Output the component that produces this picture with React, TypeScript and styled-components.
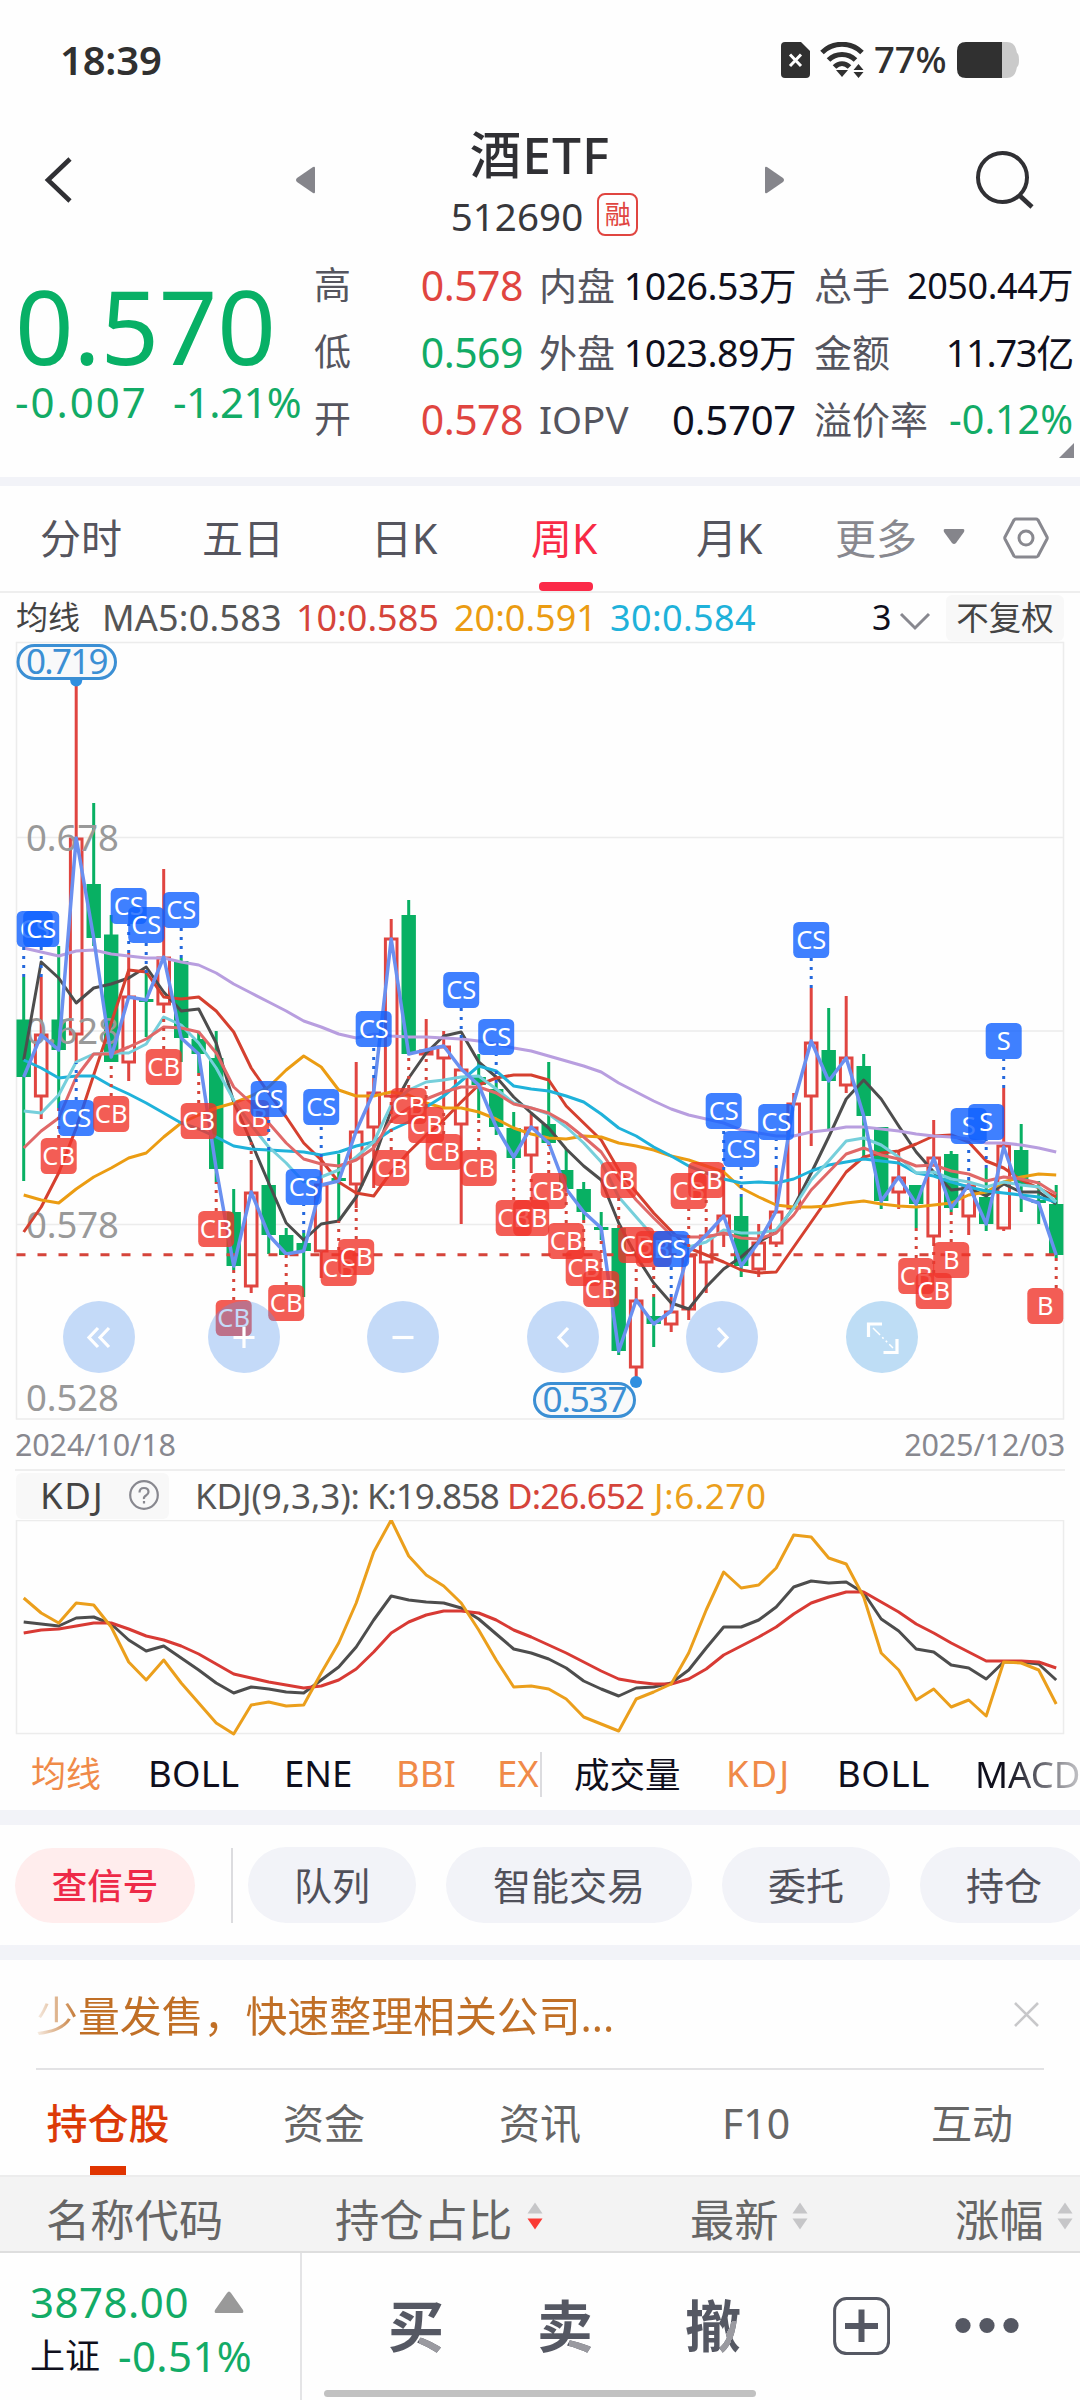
import React from 'react';
import styled, { createGlobalStyle, css } from 'styled-components';

const RED = '#e04540';
const GREEN = '#12ab66';
const INK = '#0f0f1c';
const SLATE = '#55555e';
const FONT = "'Noto Sans', 'Noto Sans CJK SC', sans-serif";

const Global = createGlobalStyle`
  * { box-sizing: border-box; }
  body { margin: 0; background: #fff; font-family: ${FONT}; }
`;

const Screen = styled.main`
  width: 1080px;
  height: 2400px;
  overflow: hidden;
  display: flex;
  flex-direction: column;
  background: #fefefe;
  white-space: nowrap;
`;

interface CellProps { $w?: number; $size?: number; $color?: string; $ls?: number; $weight?: number; $align?: string; $indent?: number }
const Cell = styled.span<CellProps>`
  flex: none;
  display: block;
  ${p => p.$w !== undefined && css`width: ${p.$w}px;`}
  ${p => p.$size && css`font-size: ${p.$size}px;`}
  color: ${p => p.$color ?? 'inherit'};
  letter-spacing: ${p => p.$ls ?? 0}px;
  font-weight: ${p => p.$weight ?? 400};
  text-align: ${p => p.$align ?? 'left'};
  padding-left: ${p => p.$indent ?? 0}px;
  line-height: 1.2;
`;

const Band = styled.div<{ $h: number }>`
  flex: none;
  height: ${p => p.$h}px;
  background: #f2f3f8;
`;

/* ---------- status bar ---------- */
const StatusBar = styled.header`
  flex: none;
  height: 120px;
  padding: 0 61px 0 60px;
  display: flex;
  align-items: center;
  justify-content: space-between;
  color: #303030;
`;
const StatusIcons = styled.div`
  display: flex;
  align-items: center;
  gap: 10px;
`;

/* ---------- title ---------- */
const TitleBar = styled.div`
  flex: none;
  height: 132px;
  display: grid;
  grid-template-columns: 296px 19px 450px 19px 1fr;
  align-items: start;
`;
const TitleCell = styled.div<{ $left?: number; $top?: number }>`
  padding-left: ${p => p.$left ?? 0}px;
  padding-top: ${p => p.$top ?? 0}px;
  svg { display: block; }
`;
const TitleStack = styled.div`
  display: flex;
  flex-direction: column;
  align-items: center;
  padding-top: 0;
`;
const StockName = styled.h1`
  margin: 0;
  height: 69px;
  line-height: 68px;
  font-size: 51.5px;
  font-weight: 500;
  color: #303034;
  letter-spacing: 1px;
`;
const CodeRow = styled.div`
  display: flex;
  align-items: center;
  gap: 14px;
  margin-left: 9px;
  height: 54px;
  color: #38383c;
`;
const MarginBadge = styled.span`
  width: 41px;
  height: 43px;
  margin-top: -3px;
  border: 2px solid ${RED};
  border-radius: 8px;
  color: ${RED};
  font-size: 26px;
  line-height: 38px;
  text-align: center;
`;

/* ---------- quote ---------- */
const Quote = styled.section`
  flex: none;
  height: 225px;
  display: grid;
  grid-template-columns: 314px 225px 275px 1fr;
  position: relative;
`;
const PriceBlock = styled.div`
  padding: 16px 0 0 15px;
  color: ${GREEN};
`;
const BigPrice = styled.div`
  height: 110px;
  line-height: 110px;
  margin-top: 2px;
  font-size: 102.5px;
  letter-spacing: -0.3px;
  color: #08b066;
`;
const ChangeRow = styled.div`
  display: flex;
  height: 46px;
  margin-top: -1px;
  align-items: center;
`;
const QuoteColumn = styled.div<{ $right: number }>`
  padding-right: ${p => p.$right}px;
`;
const QuoteRow = styled.div`
  height: 67px;
  display: flex;
  align-items: center;
  justify-content: space-between;
  font-size: 38px;
  color: ${SLATE};
`;
const ExpandMark = styled.svg`
  position: absolute;
  right: 6px;
  top: 191px;
`;

/* ---------- period tabs ---------- */
const PeriodTabs = styled.nav`
  flex: none;
  height: 107px;
  padding-left: 40px;
  display: flex;
  align-items: stretch;
  border-bottom: 2px solid #eee;
`;
const PeriodTab = styled.div<{ $w: number; $active?: boolean; $muted?: boolean }>`
  flex: none;
  width: ${p => p.$w}px;
  display: flex;
  flex-direction: column;
  justify-content: flex-end;
  font-size: 41px;
  color: ${p => (p.$active ? '#f82a45' : p.$muted ? '#88888f' : SLATE)};
  span { display: block; height: 83px; line-height: 79px; }
`;
const PeriodLine = styled.i<{ $on?: boolean }>`
  display: block;
  width: 54px;
  height: 9px;
  margin-left: 8px;
  border-radius: 4px;
  background: ${p => (p.$on ? '#fb2a48' : 'transparent')};
`;
const TabIcon = styled.div<{ $w: number; $top: number }>`
  width: ${p => p.$w}px;
  padding-top: ${p => p.$top}px;
`;

/* ---------- main chart ---------- */
const Legend = styled.div`
  flex: none;
  height: 49px;
  padding-left: 16px;
  display: flex;
  align-items: center;
  font-size: 36px;
  color: #555;
`;
const Chip = styled.div<{ $w: number; $h: number }>`
  flex: none;
  width: ${p => p.$w}px;
  height: ${p => p.$h}px;
  display: flex;
  align-items: center;
  background: #f8f8f8;
  border-radius: 6px;
  color: #444;
`;
const ChartArea = styled.section`
  flex: none;
  height: 778px;
  position: relative;
  svg { display: block; overflow: visible; }
`;
const RoundButton = styled.button<{ $x: number; $tint?: string }>`
  position: absolute;
  left: ${p => p.$x - 36}px;
  top: 659px;
  width: 72px;
  height: 72px;
  padding: 0;
  border: 0;
  border-radius: 50%;
  background: ${p => p.$tint ?? 'rgba(89, 152, 238, 0.35)'};
`;
const DateRow = styled.div`
  flex: none;
  height: 51px;
  margin: 0 15px 0 15px;
  display: flex;
  justify-content: space-between;
  align-items: center;
  color: #88888f;
  border-bottom: 2px solid #eee;
`;

/* ---------- KDJ ---------- */
const KdjHeader = styled.div`
  flex: none;
  height: 49px;
  padding-left: 16px;
  display: flex;
  align-items: center;
  font-size: 36px;
  color: #555;
`;
const KdjArea = styled.section`
  flex: none;
  height: 216px;
  svg { display: block; }
`;
const IndicatorRow = styled.div`
  flex: none;
  height: 74px;
  padding: 2px 0 0 31px;
  display: flex;
  align-items: center;
  font-size: 36.5px;
  color: ${INK};
`;
const Divider = styled.i<{ $h: number; $mr?: number }>`
  flex: none;
  width: 2px;
  height: ${p => p.$h}px;
  margin-right: ${p => p.$mr ?? 0}px;
  background: #dcdcdf;
`;
const FadeOut = styled.span`
  width: 104px;
  overflow: hidden;
  -webkit-mask-image: linear-gradient(90deg, #000 30%, rgba(0, 0, 0, 0.25) 100%);
  mask-image: linear-gradient(90deg, #000 30%, rgba(0, 0, 0, 0.25) 100%);
`;

/* ---------- actions ---------- */
const Actions = styled.div`
  flex: none;
  height: 120px;
  padding-left: 15px;
  display: flex;
  align-items: center;
`;
const Pill = styled.button<{ $w: number; $hot?: boolean }>`
  flex: none;
  width: ${p => p.$w}px;
  height: ${p => (p.$hot ? 75 : 76)}px;
  margin-right: ${p => (p.$hot ? 36 : 30)}px;
  padding: 0 0 4px;
  border: 0;
  border-radius: 38px;
  background: ${p => (p.$hot ? '#ffeded' : '#f2f3f8')};
  color: ${p => (p.$hot ? '#ee2a48' : '#50505a')};
  font-family: inherit;
  font-size: ${p => (p.$hot ? 35.5 : 38)}px;
  font-weight: ${p => (p.$hot ? 500 : 400)};
`;

/* ---------- notice ---------- */
const Notice = styled.div`
  flex: none;
  height: 110px;
  margin: 0 36px;
  padding-right: 4px;
  display: flex;
  align-items: center;
  justify-content: space-between;
  border-bottom: 2px solid #e2e2e4;
`;
const NoticeText = styled.span`
  padding-top: 3px;
  font-size: 41.9px;
  line-height: 60px;
  background: linear-gradient(90deg, rgba(192, 111, 38, 0.1), #c06f26 44px);
  -webkit-background-clip: text;
  background-clip: text;
  color: transparent;
`;

/* ---------- holdings ---------- */
const InfoTabs = styled.nav`
  flex: none;
  height: 105px;
  display: grid;
  grid-template-columns: repeat(5, 216px);
`;
const InfoTab = styled.div<{ $active?: boolean }>`
  display: flex;
  flex-direction: column;
  align-items: center;
  font-size: 41px;
  font-weight: ${p => (p.$active ? 500 : 400)};
  color: ${p => (p.$active ? '#dc3a08' : '#666')};
  span { height: 96px; line-height: 107px; }
  i { width: 36px; height: 9px; background: ${p => (p.$active ? '#e03400' : 'transparent')}; }
`;
const TableHead = styled.div`
  flex: none;
  height: 78px;
  padding: 0 0 0 46px;
  display: flex;
  align-items: center;
  background: #f3f3f3;
  border-top: 2px solid #ececec;
  border-bottom: 2px solid #dedede;
  color: #666;
  font-size: 44.3px;
`;
const HeadLabel = styled.span<{ $w: number }>`
  flex: none;
  width: ${p => p.$w}px;
  padding-top: 11px;
  line-height: 54px;
`;
const SortBox = styled.span<{ $w?: number }>`
  flex: none;
  width: ${p => p.$w ?? 16}px;
  padding-top: 3px;
  svg { display: block; }
`;

/* ---------- bottom bar ---------- */
const BottomBar = styled.footer`
  flex: none;
  height: 147px;
  display: grid;
  grid-template-columns: 302px 1fr;
`;
const IndexBox = styled.div`
  border-right: 2px solid #e4e4e6;
  padding: 13px 0 0 30px;
  color: ${GREEN};
  font-size: 42px;
`;
const IndexRow = styled.div<{ $h: number }>`
  height: ${p => p.$h}px;
  display: flex;
  align-items: center;
`;
const Trade = styled.div`
  display: flex;
  flex-direction: column;
`;
const TradeRow = styled.div`
  height: 137px;
  padding: 9px 0 0 86px;
  display: flex;
  align-items: center;
`;
const TradeWord = styled.span<{ $fill: string; $w: number }>`
  width: ${p => p.$w}px;
  height: 70px;
  line-height: 68px;
  font-size: 56px;
  font-weight: 700;
  color: transparent;
  background: ${p => p.$fill};
  -webkit-background-clip: text;
  background-clip: text;
`;
const HomeBar = styled.i`
  width: 432px;
  height: 7px;
  margin-left: 22px;
  border-radius: 4px;
  background: #c1c1c1;
`;

/* ---------- data ---------- */
const X0 = 23.7;
const STEP = 17.5;
const xAt = (i: number) => X0 + STEP * i;

type Candle = [up: 0 | 1, high: number, top: number, bottom: number, low: number];
const candles: Candle[] = [
  [0, 977, 1019.5, 1077, 1181], [1, 977, 1034, 1097, 1119], [0, 946, 1019.5, 1050, 1108], [1, 681, 838, 1035, 1063],
  [0, 803, 884, 938, 946], [0, 915, 934.5, 1062, 1062], [1, 953, 996, 1063, 1081], [0, 973, 999, 1001, 1037],
  [1, 869, 957, 1005, 1012], [0, 958, 961, 1038, 1062], [0, 1031, 1039, 1054, 1073], [0, 1031, 1058, 1169, 1182],
  [0, 1189, 1212, 1266, 1270], [1, 1163, 1192, 1287, 1293], [0, 1150, 1185, 1235, 1254], [0, 1228, 1235, 1255, 1255],
  [0, 1233, 1243, 1251, 1297], [1, 1157, 1184, 1252, 1278], [0, 1154, 1178, 1181, 1221], [1, 1062, 1131, 1185, 1208],
  [1, 1078, 1092, 1128, 1188], [1, 919, 938, 1097, 1098], [0, 900, 915, 1054, 1054], [1, 1019, 1050, 1055, 1055],
  [1, 1031, 1046, 1059, 1107], [1, 1038, 1069, 1125, 1224], [0, 1054, 1077, 1085, 1118], [0, 1083, 1089, 1127, 1135],
  [0, 1112, 1128, 1158, 1169], [1, 1114, 1127, 1156, 1172], [0, 1062, 1124, 1143, 1145], [0, 1149, 1170, 1189, 1189],
  [0, 1182, 1189, 1212, 1220], [0, 1212, 1227, 1229, 1240], [0, 1228, 1228, 1351, 1355], [1, 1290, 1300, 1368, 1377],
  [0, 1297, 1316, 1324, 1347], [1, 1297, 1311, 1325, 1332], [1, 1247, 1255, 1310, 1320], [1, 1230, 1235, 1263, 1293],
  [1, 1170, 1215, 1235, 1247], [0, 1197, 1216, 1266, 1277], [1, 1224, 1242, 1270, 1277], [1, 1168, 1211, 1244, 1247],
  [1, 1093, 1103, 1209, 1209], [1, 988, 1042, 1097, 1146], [0, 1008, 1050, 1081, 1130], [1, 996, 1057, 1086, 1093],
  [0, 1054, 1066, 1116, 1157], [0, 1127, 1127, 1201, 1209], [1, 1151, 1177, 1193, 1209], [0, 1185, 1185, 1204, 1228],
  [1, 1120, 1157, 1237, 1243], [0, 1151, 1154, 1208, 1212], [1, 1180, 1185, 1217, 1235], [0, 1168, 1197, 1224, 1231],
  [1, 1088, 1145, 1229, 1231], [0, 1124, 1150, 1185, 1212], [0, 1181, 1200, 1203, 1224], [0, 1185, 1204, 1255, 1258],
];

interface Series { color: string; width?: number; ys: number[] }
const averages: Series[] = [
  { color: '#4d4d4d', ys: [1060, 962, 978, 1003, 988, 984, 978, 967, 992, 1011, 1009, 1043, 1102, 1142, 1183, 1223, 1240, 1224, 1221, 1197, 1160, 1110, 1078, 1053, 1036, 1032, 1062, 1077, 1097, 1113, 1128, 1149, 1166, 1180, 1223, 1256, 1283, 1303, 1309, 1287, 1269, 1257, 1242, 1232, 1207, 1173, 1137, 1099, 1080, 1099, 1126, 1152, 1172, 1190, 1188, 1196, 1184, 1192, 1192, 1204] },
  { color: '#d5402f', ys: [1232, 1207, 1173, 1128, 1075, 1023, 970, 972, 997, 999, 997, 1011, 1032, 1068, 1093, 1117, 1143, 1160, 1182, 1193, 1196, 1172, 1152, 1135, 1120, 1102, 1085, 1078, 1075, 1075, 1080, 1106, 1123, 1140, 1170, 1192, 1213, 1231, 1248, 1255, 1262, 1270, 1273, 1272, 1247, 1222, 1197, 1172, 1157, 1153, 1151, 1144, 1136, 1135, 1142, 1161, 1168, 1180, 1188, 1197] },
  { color: '#eb9c12', ys: [1195, 1200, 1203, 1189, 1177, 1168, 1158, 1153, 1137, 1123, 1115, 1108, 1103, 1096, 1087, 1070, 1056, 1067, 1090, 1096, 1096, 1092, 1095, 1103, 1108, 1108, 1112, 1119, 1128, 1134, 1138, 1139, 1136, 1137, 1143, 1146, 1150, 1156, 1160, 1166, 1172, 1188, 1197, 1205, 1207, 1207, 1206, 1203, 1201, 1204, 1206, 1207, 1205, 1203, 1195, 1192, 1182, 1177, 1174, 1175] },
  { color: '#1fb2da', ys: [1060, 1068, 1078, 1076, 1076, 1086, 1094, 1103, 1113, 1123, 1129, 1137, 1146, 1149, 1150, 1151, 1152, 1155, 1152, 1146, 1142, 1130, 1122, 1107, 1096, 1081, 1066, 1071, 1086, 1089, 1091, 1096, 1102, 1114, 1128, 1136, 1147, 1156, 1166, 1173, 1179, 1183, 1182, 1183, 1179, 1171, 1165, 1162, 1159, 1161, 1163, 1173, 1176, 1182, 1187, 1191, 1193, 1195, 1197, 1202] },
  { color: '#b89edf', ys: [948, 952, 956, 951, 950, 954, 956, 958, 958, 962, 965, 973, 984, 993, 1002, 1011, 1021, 1027, 1034, 1038, 1034, 1036, 1037, 1037, 1038, 1039, 1041, 1044, 1048, 1051, 1056, 1061, 1066, 1072, 1083, 1092, 1101, 1109, 1115, 1119, 1123, 1130, 1133, 1136, 1136, 1132, 1130, 1127, 1127, 1129, 1131, 1134, 1136, 1137, 1139, 1143, 1143, 1145, 1148, 1152] },
  { color: '#76cfdb', ys: [1111, 1113, 1095, 1062, 1054, 1053, 1053, 1044, 1017, 1025, 1043, 1068, 1100, 1125, 1147, 1163, 1182, 1177, 1170, 1157, 1142, 1105, 1090, 1082, 1080, 1077, 1076, 1089, 1103, 1108, 1114, 1127, 1143, 1162, 1197, 1217, 1237, 1247, 1247, 1242, 1230, 1233, 1233, 1230, 1208, 1180, 1161, 1141, 1138, 1145, 1157, 1173, 1172, 1179, 1182, 1187, 1182, 1185, 1187, 1202] },
  { color: '#e06868', ys: [1148, 1131, 1118, 1077, 1054, 1054, 1047, 1039, 1027, 1028, 1032, 1053, 1087, 1103, 1123, 1143, 1159, 1164, 1166, 1160, 1148, 1120, 1108, 1099, 1092, 1087, 1087, 1093, 1104, 1108, 1113, 1123, 1137, 1152, 1178, 1200, 1218, 1235, 1237, 1237, 1233, 1238, 1239, 1233, 1215, 1190, 1172, 1154, 1148, 1155, 1159, 1166, 1165, 1171, 1174, 1181, 1177, 1179, 1183, 1194] },
  { color: '#6a90f0', width: 3.5, ys: [1077, 1035, 1050, 838, 938, 1057, 997, 1000, 957, 1038, 1054, 1169, 1266, 1192, 1235, 1254, 1251, 1185, 1181, 1131, 1092, 939, 1054, 1050, 1046, 1069, 1085, 1127, 1157, 1127, 1143, 1189, 1212, 1228, 1351, 1300, 1324, 1311, 1252, 1235, 1216, 1266, 1242, 1211, 1103, 1041, 1081, 1058, 1116, 1201, 1177, 1204, 1158, 1208, 1185, 1224, 1147, 1197, 1203, 1255] },
];

type Marker = [index: number, label: string, top: number];
const markers: Marker[] = [
  [0, 'CS', 911], [1, 'CS', 911], [2, 'CB', 1138], [3, 'CS', 1100], [5, 'CB', 1096], [6, 'CS', 888], [7, 'CS', 907],
  [8, 'CB', 1049], [9, 'CS', 892], [10, 'CB', 1103], [11, 'CB', 1211], [12, 'CB', 1300], [13, 'CB', 1100], [14, 'CS', 1081],
  [15, 'CB', 1285], [16, 'CS', 1169], [17, 'CS', 1089], [18, 'CB', 1250], [19, 'CB', 1239], [20, 'CS', 1011], [21, 'CB', 1150],
  [22, 'CB', 1088], [23, 'CB', 1107], [24, 'CB', 1134], [25, 'CS', 972], [26, 'CB', 1150], [27, 'CS', 1019], [28, 'CB', 1200],
  [29, 'CB', 1200], [30, 'CB', 1173], [31, 'CB', 1223], [32, 'CB', 1250], [33, 'CB', 1271], [34, 'CB', 1162], [35, 'CB', 1227],
  [36, 'CB', 1231], [37, 'CS', 1231], [38, 'CB', 1173], [39, 'CB', 1162], [40, 'CS', 1093], [41, 'CS', 1131], [43, 'CS', 1104],
  [45, 'CS', 922], [51, 'CB', 1258], [52, 'CB', 1273], [53, 'B', 1242], [54, 'S', 1108], [55, 'S', 1104], [56, 'S', 1023], [59, 'B', 1288],
];

const kdj: Series[] = [
  { color: '#4d4d4d', ys: [1622, 1624, 1626, 1618, 1617, 1624, 1640, 1651, 1646, 1658, 1670, 1683, 1693, 1687, 1689, 1692, 1693, 1680, 1667, 1647, 1620, 1596, 1600, 1602, 1603, 1608, 1619, 1634, 1649, 1653, 1659, 1668, 1681, 1689, 1696, 1688, 1687, 1683, 1670, 1648, 1627, 1627, 1620, 1607, 1587, 1581, 1583, 1582, 1593, 1619, 1631, 1649, 1652, 1665, 1668, 1679, 1662, 1662, 1664, 1680] },
  { color: '#d83a34', ys: [1633, 1630, 1629, 1626, 1623, 1623, 1629, 1636, 1640, 1646, 1654, 1664, 1674, 1678, 1682, 1685, 1688, 1686, 1680, 1669, 1652, 1633, 1622, 1615, 1611, 1611, 1613, 1620, 1630, 1637, 1645, 1653, 1662, 1671, 1679, 1682, 1684, 1684, 1679, 1669, 1655, 1646, 1637, 1627, 1614, 1603, 1597, 1592, 1592, 1602, 1612, 1624, 1633, 1643, 1652, 1661, 1661, 1661, 1662, 1668] },
  { color: '#eb9f1c', ys: [1598, 1613, 1623, 1603, 1605, 1627, 1662, 1680, 1660, 1683, 1703, 1723, 1734, 1705, 1702, 1706, 1705, 1673, 1643, 1603, 1552, 1520, 1556, 1575, 1586, 1603, 1630, 1660, 1687, 1686, 1689, 1699, 1717, 1724, 1731, 1699, 1692, 1684, 1653, 1610, 1572, 1588, 1585, 1568, 1535, 1537, 1558, 1564, 1597, 1653, 1670, 1700, 1689, 1707, 1700, 1716, 1662, 1663, 1670, 1704] },
];

const Polyline = ({ color, width = 3, ys }: Series) => (
  <polyline
    fill="none"
    stroke={color}
    strokeWidth={width}
    strokeLinejoin="round"
    points={ys.map((y, i) => `${xAt(i)},${y}`).join(' ')}
  />
);

const CandleMark = ({ i, c }: { i: number; c: Candle }) => {
  const [up, high, top, bottom, low] = c;
  const x = xAt(i);
  if (!up) {
    return (
      <g fill="#08b063">
        <rect x={x - 1.5} y={high} width={3} height={low - high} />
        <rect x={x - 7.2} y={top} width={14.4} height={Math.max(bottom - top, 3)} />
      </g>
    );
  }
  return (
    <g stroke={RED} strokeWidth={3} fill="none">
      <path d={`M${x} ${high}V${top}M${x} ${bottom}V${low}`} />
      <rect x={x - 5.8} y={top + 1} width={11.6} height={Math.max(bottom - top - 2, 2)} />
    </g>
  );
};

const MarkerTag = ({ m }: { m: Marker }) => {
  const [i, label, top] = m;
  const x = xAt(i);
  const blue = label.endsWith('S');
  const [, high, , , low] = candles[i];
  const left = Math.min(Math.max(x - 18, 16.7), 1027.3);
  const span = top > low ? [low, top] : [high, top + 36];
  return (
    <g>
      <path d={`M${x} ${Math.max(...span)}V${Math.min(...span)}`} stroke={blue ? '#2468dc' : '#d5443a'} strokeWidth={3} strokeDasharray="3 6" />
      <rect x={left} y={top} width={36} height={36} rx={5.5} fill={blue ? '#0f60ff' : '#f0342a'} fillOpacity={0.8} />
      <text x={left + 18} y={top + 27} fontSize={25.5} fill="#fff" textAnchor="middle">{label}</text>
    </g>
  );
};

const PriceTag = ({ x, y, w, text }: { x: number; y: number; w: number; text: string }) => (
  <g>
    <rect x={x} y={y} width={w} height={33} rx={16.5} fill="#f8f9fa" stroke="#3b8fd4" strokeWidth={3} />
    <text x={x + 8} y={y + 28.5} fontSize={35} textLength={w - 15} fill="#3b8fd4">{text}</text>
  </g>
);

const MainChart = () => (
  <svg width="1080" height="778" viewBox="0 642 1080 778" fontFamily={FONT}>
    <path d="M16.5 642.5H1063.5V1419H16.5ZM16.5 837.5H1063.5M16.5 1031H1063.5M16.5 1224.5H1063.5" fill="none" stroke="#ececec" strokeWidth="1.5" />
    {candles.map((c, i) => <CandleMark key={i} i={i} c={c} />)}
    {[['0.678', 851], ['0.628', 1043.5], ['0.578', 1238], ['0.528', 1411]].map(([t, y]) => (
      <text key={t} x="26" y={y} fontSize="36.5" fill="#999" textLength="93">{t}</text>
    ))}
    <path d="M16.5 1254.7H1059" stroke="#d5443a" strokeWidth="3" strokeDasharray="9 12" />
    {averages.map((s, i) => <Polyline key={i} {...s} />)}
    {markers.map(m => <MarkerTag key={m[0]} m={m} />)}
    <circle cx="76.2" cy="680.5" r="6" fill="#2f8fe0" />
    <circle cx="636" cy="1382" r="6" fill="#2f8fe0" />
    <PriceTag x={18} y={645.5} w={97.5} text="0.719" />
    <PriceTag x={534.5} y={1383.5} w={100} text="0.537" />
  </svg>
);

const buttons: { x: number; d: string; tint?: string }[] = [
  { x: 98.7, d: 'M35 27L26 36.5L35 46M46 27L37 36.5L46 46' },
  { x: 243.7, d: 'M36 26V47M25.5 36.5H46.5' },
  { x: 403, d: 'M25.5 36.5H46.5' },
  { x: 563, d: 'M41 27L32 36.5L41 46' },
  { x: 722, d: 'M32 27L41 36.5L32 46' },
  { x: 882, d: 'M22.5 36V23H36M37.5 51.5H51V38', tint: 'rgba(94, 172, 232, 0.4)' },
];

const SortArrows = ({ active }: { active?: boolean }) => (
  <svg width="16" height="28" viewBox="0 0 16 28">
    <path d="M8 0.5L15.5 11.5H0.5Z" fill="#c6c6c8" />
    <path d="M8 27.5L15.5 16.5H0.5Z" fill={active ? '#fa3a34' : '#c6c6c8'} />
  </svg>
);

const soft = '#9a9aa0';
const dark = '#555863';

export default function App() {
  return (
    <>
      <Global />
      <Screen>
        <StatusBar>
          <Cell $size={40} $weight={600} $ls={-0.2}>18:39</Cell>
          <StatusIcons>
            <svg width="29" height="36" viewBox="0 0 29 36">
              <path d="M4 0H20L29 9V32a4 4 0 0 1-4 4H4a4 4 0 0 1-4-4V4a4 4 0 0 1 4-4Z" fill="#303030" />
              <path d="M9 12.5L20 24M20 12.5L9 24" stroke="#fff" strokeWidth="3" />
            </svg>
            <svg width="44" height="36" viewBox="0 0 44 36" fill="none" stroke="#303030" strokeWidth="5">
              <path d="M2 10.5C13-0.5 31-0.5 42 10.5" />
              <path d="M8.5 18C16 10.5 28 10.5 35.5 18" />
              <path d="M14.5 25C19 20.5 25 20.5 29.5 25" />
              <path d="M16 28H28L22 35Z" fill="#303030" stroke="none" />
              <path d="M38.500 22L43.500 28H33.500ZM38.500 36L43.500 30H33.500Z" fill="#303030" stroke="none" />
            </svg>
            <Cell $w={73} $size={36.5} $weight={500} $ls={-0.1}>77%</Cell>
            <svg width="62" height="36" viewBox="0 0 62 36">
              <path d="M8 0H50Q57 0 59 7L60 11Q62 12 62 18T60 25L59 29Q57 36 50 36H8Z" fill="#cacaca" />
              <path d="M9 0H45V36H9Q0 36 0 27V9Q0 0 9 0Z" fill="#303030" />
            </svg>
          </StatusIcons>
        </StatusBar>

        <TitleBar>
          <TitleCell $left={44} $top={37}>
            <svg width="30" height="46" viewBox="0 0 30 46"><path d="M26 2L4 23L26 44" fill="none" stroke="#303034" strokeWidth="4.600" /></svg>
          </TitleCell>
          <TitleCell $top={46}>
            <svg width="19" height="28" viewBox="0 0 19 28"><path d="M19 2V26Q19 28 17 27L1 16Q-1 14 1 12L17 1Q19 0 19 2Z" fill="#85858b" /></svg>
          </TitleCell>
          <TitleStack>
            <StockName>酒ETF</StockName>
            <CodeRow>
              <Cell $size={38.5} $ls={0.1}>512690</Cell>
              <MarginBadge>融</MarginBadge>
            </CodeRow>
          </TitleStack>
          <TitleCell $top={46}>
            <svg width="19" height="28" viewBox="0 0 19 28"><path d="M0 2V26Q0 28 2 27L18 16Q20 14 18 12L2 1Q0 0 0 2Z" fill="#85858b" /></svg>
          </TitleCell>
          <TitleCell $left={191} $top={29}>
            <svg width="62" height="62" viewBox="0 0 62 62" fill="none" stroke="#303034" strokeWidth="4">
              <circle cx="27.500" cy="28.500" r="24.500" /><path d="M44 46L57 58" strokeWidth="4.600" />
            </svg>
          </TitleCell>
        </TitleBar>

        <Quote>
          <PriceBlock>
            <BigPrice>0.570</BigPrice>
            <ChangeRow>
              <Cell $w={158} $size={42} $ls={2}>-0.007</Cell>
              <Cell $size={42} $ls={-0.6}>-1.21%</Cell>
            </ChangeRow>
          </PriceBlock>
          <QuoteColumn $right={16}>
            {[['高', '0.578', RED], ['低', '0.569', GREEN], ['开', '0.578', RED]].map(([k, v, c]) => (
              <QuoteRow key={k}>
                <Cell $size={37}>{k}</Cell><Cell $size={41} $color={c} $ls={-0.5}>{v}</Cell>
              </QuoteRow>
            ))}
          </QuoteColumn>
          <QuoteColumn $right={18}>
            <QuoteRow><Cell>内盘</Cell><Cell $size={37.5} $color={INK} $ls={-0.5}>1026.53万</Cell></QuoteRow>
            <QuoteRow><Cell>外盘</Cell><Cell $size={37.5} $color={INK} $ls={-0.5}>1023.89万</Cell></QuoteRow>
            <QuoteRow><Cell $size={38.5}>IOPV</Cell><Cell $size={40} $color={INK} $ls={-0.2}>0.5707</Cell></QuoteRow>
          </QuoteColumn>
          <QuoteColumn $right={7}>
            <QuoteRow><Cell>总手</Cell><Cell $size={36} $color={INK} $ls={-0.4}>2050.44万</Cell></QuoteRow>
            <QuoteRow><Cell>金额</Cell><Cell $size={38} $color={INK} $ls={-1.3}>11.73亿</Cell></QuoteRow>
            <QuoteRow><Cell>溢价率</Cell><Cell $size={39.5} $color={GREEN}>-0.12%</Cell></QuoteRow>
          </QuoteColumn>
          <ExpandMark width="15" height="15"><path d="M15 0V15H0Z" fill="#88888f" /></ExpandMark>
        </Quote>

        <Band $h={9} />

        <PeriodTabs>
          <PeriodTab $w={162}><span>分时</span><PeriodLine /></PeriodTab>
          <PeriodTab $w={169}><span>五日</span><PeriodLine /></PeriodTab>
          <PeriodTab $w={160}><span>日K</span><PeriodLine /></PeriodTab>
          <PeriodTab $w={165} $active><span>周K</span><PeriodLine $on /></PeriodTab>
          <PeriodTab $w={139}><span>月K</span><PeriodLine /></PeriodTab>
          <PeriodTab $w={108} $muted><span>更多</span><PeriodLine /></PeriodTab>
          <TabIcon $w={60} $top={42}>
            <svg width="22" height="18" viewBox="0 0 22 18"><path d="M2 1H20Q22 1 21 4L13 15Q11 17 9 15L1 4Q0 1 2 1Z" fill="#85858b" /></svg>
          </TabIcon>
          <TabIcon $w={46} $top={31}>
            <svg width="46" height="42" viewBox="0 0 46 42" fill="none" stroke="#88888f" strokeWidth="3">
              <path d="M13 2H33Q34 2 35 3L44 20Q44.500 21 44 22L35 39Q34 40 33 40H13Q12 40 11 39L2 22Q1.500 21 2 20L11 3Q12 2 13 2Z" />
              <circle cx="23" cy="21" r="7" />
            </svg>
          </TabIcon>
        </PeriodTabs>

        <Legend>
          <Cell $w={86} $size={32} $color="#444">均线</Cell>
          <Cell $w={194} $ls={0.2}>MA5:0.583</Cell>
          <Cell $w={158} $color="#d5443a">10:0.585</Cell>
          <Cell $w={156} $color="#eb9c12">20:0.591</Cell>
          <Cell $w={262} $color="#1fb2da" $ls={0.4}>30:0.584</Cell>
          <Cell $w={27} $size={34} $color={INK}>3</Cell>
          <Cell $w={47}>
            <svg width="32" height="20" viewBox="0 0 32 20"><path d="M2 3L16 17L30 3" fill="none" stroke="#88888f" strokeWidth="3" /></svg>
          </Cell>
          <Chip $w={118} $h={46}><Cell $w={118} $size={32.5} $align="center">不复权</Cell></Chip>
        </Legend>

        <ChartArea>
          <MainChart />
          {buttons.map(b => (
            <RoundButton key={b.x} $x={b.x} $tint={b.tint}>
              <svg width="72" height="72" viewBox="0 0 72 72" fill="none" stroke="#fff" strokeWidth="3.200">
                <path d={b.d} />
                {b.tint && <path d="M27 27L47 47" strokeWidth="1.500" strokeDasharray="10 3 2 3 2 3" />}
              </svg>
            </RoundButton>
          ))}
        </ChartArea>
        <DateRow>
          <Cell $size={30.5} $ls={-0.15}>2024/10/18</Cell>
          <Cell $size={30.5} $ls={-0.15}>2025/12/03</Cell>
        </DateRow>

        <KdjHeader>
          <Chip $w={153} $h={46}>
            <Cell $w={112} $size={36.5} $ls={1.7} $indent={24}>KDJ</Cell>
            <svg width="32" height="32" viewBox="0 0 32 32" fill="none" stroke="#88888f" strokeWidth="2.200">
              <circle cx="16" cy="15" r="13.800" />
              <path d="M11.500 12.500Q11.500 8 16 8T20.500 12Q20.500 14 18 15.500T16 19" /><path d="M16 21V23.500" />
            </svg>
          </Chip>
          <Cell $w={26} />
          <Cell $w={172} $size={35} $ls={-0.1}>KDJ(9,3,3):</Cell>
          <Cell $w={140} $size={35} $ls={-1.1}>K:19.858</Cell>
          <Cell $w={147} $size={35} $ls={-0.9} $color="#d5443a">D:26.652</Cell>
          <Cell $size={35} $ls={0.6} $color="#eb9f1c">J:6.270</Cell>
        </KdjHeader>
        <KdjArea>
          <svg width="1080" height="216" viewBox="0 1520 1080 216">
            <rect x="16.500" y="1520.500" width="1047" height="213" fill="none" stroke="#ececec" strokeWidth="1.500" />
            {kdj.map((s, i) => <Polyline key={i} {...s} />)}
          </svg>
        </KdjArea>

        <IndicatorRow>
          <Cell $w={117} $size={35} $color="#f08a48">均线</Cell>
          <Cell $w={136} $ls={0.2}>BOLL</Cell>
          <Cell $w={112}>ENE</Cell>
          <Cell $w={101} $color="#f08a48">BBI</Cell>
          <Cell $w={43} $color="#f08a48">EX</Cell>
          <Divider $h={45} $mr={32} />
          <Cell $w={152} $size={35.5}>成交量</Cell>
          <Cell $w={111} $ls={2} $color="#f08a48">KDJ</Cell>
          <Cell $w={138} $ls={0.6}>BOLL</Cell>
          <FadeOut>MACD</FadeOut>
        </IndicatorRow>

        <Band $h={15} />
        <Actions>
          <Pill $w={180} $hot>查信号</Pill>
          <Divider $h={75} $mr={15} />
          <Pill $w={168}>队列</Pill>
          <Pill $w={246}>智能交易</Pill>
          <Pill $w={168}>委托</Pill>
          <Pill $w={168}>持仓</Pill>
        </Actions>
        <Band $h={15} />

        <Notice>
          <NoticeText>少量发售，快速整理相关公司...</NoticeText>
          <svg width="27" height="27" viewBox="0 0 27 27"><path d="M2 2L25 25M25 2L2 25" stroke="#c8c8ca" strokeWidth="2.600" /></svg>
        </Notice>

        <InfoTabs>
          <InfoTab $active><span>持仓股</span><i /></InfoTab>
          <InfoTab><span>资金</span></InfoTab>
          <InfoTab><span>资讯</span></InfoTab>
          <InfoTab><span>F10</span></InfoTab>
          <InfoTab><span>互动</span></InfoTab>
        </InfoTabs>
        <TableHead>
          <HeadLabel $w={289}>名称代码</HeadLabel>
          <HeadLabel $w={192}>持仓占比</HeadLabel><SortBox $w={163}><SortArrows active /></SortBox>
          <HeadLabel $w={102}>最新</HeadLabel><SortBox $w={163}><SortArrows /></SortBox>
          <HeadLabel $w={102}>涨幅</HeadLabel><SortBox><SortArrows /></SortBox>
        </TableHead>

        <BottomBar>
          <IndexBox>
            <IndexRow $h={72}>
              <Cell $w={184} $ls={0.5}>3878.00</Cell>
              <svg width="30" height="22" viewBox="0 0 30 22"><path d="M13 2Q15-1 17 2L29 19Q30 22 28 22H2Q0 22 1 19Z" fill="#999" /></svg>
            </IndexRow>
            <IndexRow $h={36}>
              <Cell $w={88} $size={35} $color={INK}>上证</Cell>
              <Cell $size={42} $ls={0.4}>-0.51%</Cell>
            </IndexRow>
          </IndexBox>
          <Trade>
            <TradeRow>
              <TradeWord $w={149} $fill={`linear-gradient(${soft}, ${soft}) 31px 47px / 28px 20px no-repeat, ${dark}`}>买</TradeWord>
              <TradeWord $w={148} $fill={`linear-gradient(${soft}, ${soft}) 32px 49px / 28px 20px no-repeat, ${dark}`}>卖</TradeWord>
              <TradeWord $w={148} $fill={`linear-gradient(114deg, transparent 38%, ${soft} 38%, ${soft} 62%, transparent 62%) 34px 30px / 19px 34px no-repeat, ${dark}`}>撤</TradeWord>
              <svg width="57" height="58" viewBox="0 0 57 58" fill="none" stroke={dark}>
                <rect x="1.600" y="1.600" width="54" height="55" rx="12" strokeWidth="3" />
                <path d="M28.500 12.500V45M12 29H45" strokeWidth="6" />
              </svg>
              <svg width="130" height="18" viewBox="0 0 130 18" fill={dark}>
                <circle cx="73" cy="8.500" r="7.600" /><circle cx="97" cy="8.500" r="7.600" /><circle cx="121" cy="8.500" r="7.600" />
              </svg>
            </TradeRow>
            <HomeBar />
          </Trade>
        </BottomBar>
      </Screen>
    </>
  );
}
